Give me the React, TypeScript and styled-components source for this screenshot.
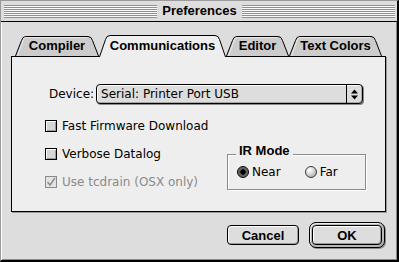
import React from "react";
import styled, { createGlobalStyle } from "styled-components";

const GlobalStyle = createGlobalStyle`
  html, body {
    margin: 0;
    padding: 0;
    background: #dddddd;
  }
  body {
    width: 399px;
    height: 262px;
    overflow: hidden;
  }
`;

const tabs = [
  { label: "Compiler", width: 84 },
  { label: "Communications", width: 127 },
  { label: "Editor", width: 63 },
  { label: "Text Colors", width: 93 },
];

const TabShape = ({ w, h, selected }: { w: number; h: number; selected: boolean }) => {
  const s = 6;
  const d = `M0.5 ${h} L${s + 0.5} 4.5 Q${s + 1.5} 0.5 ${s + 5} 0.5 L${w - s - 5} 0.5 Q${w - s - 1.5} 0.5 ${w - s - 0.5} 4.5 L${w - 0.5} ${h}`;
  return (
    <TabSvg width={w} height={h}>
      <path d={d} fill={selected ? "#eeeeee" : "#cccccc"} stroke="#000" />
      {!selected && (
        <path
          d={`M2.5 ${h} L${s + 2} 5 Q${s + 2.5} 1.5 ${s + 5} 1.5 L${w - s - 6} 1.5`}
          fill="none"
          stroke="#e8e8e8"
        />
      )}
    </TabSvg>
  );
};

const CheckMark = ({ color }: { color: string }) => (
  <svg width="10" height="10" viewBox="0 0 10 10">
    <path d="M1.5 5 L4 8 L9 1" fill="none" stroke={color} strokeWidth="1.4" />
  </svg>
);

const PopupArrowIcon = () => (
  <svg width="7" height="11" viewBox="0 0 7 11">
    <path d="M0 4.5 L3.5 0.5 L7 4.5 Z" fill="#000" />
    <path d="M0 6.5 L3.5 10.5 L7 6.5 Z" fill="#000" />
  </svg>
);

const App = () => {
  return (
    <>
      <GlobalStyle />
      <Window>
        <TitleBar>
          <Stripes />
          <Title>Preferences</Title>
          <Stripes />
        </TitleBar>

        <Body>
          <TabStrip>
            {tabs.map((t, i) => {
              const selected = i === 1;
              const h = selected ? 22 : 20;
              return (
                <Tab key={t.label} $w={t.width} $selected={selected}>
                  <TabShape w={t.width} h={h} selected={selected} />
                  <TabLabel>{t.label}</TabLabel>
                </Tab>
              );
            })}
          </TabStrip>

          <Panel>
            <DeviceRow>
              <span>Device:</span>
              <Popup>
                <PopupText>Serial: Printer Port USB</PopupText>
                <PopupArrows>
                  <PopupArrowIcon />
                </PopupArrows>
              </Popup>
            </DeviceRow>

            <Options>
              <CheckRow>
                <CheckBox />
                <span>Fast Firmware Download</span>
              </CheckRow>
              <CheckRow>
                <CheckBox />
                <span>Verbose Datalog</span>
              </CheckRow>
              <CheckRow $disabled>
                <CheckBox $disabled>
                  <CheckMark color="#8a8a8a" />
                </CheckBox>
                <span>Use tcdrain (OSX only)</span>
              </CheckRow>

              <GroupBox>
                <GroupTitle>IR Mode</GroupTitle>
                <RadioItem>
                  <Radio $on />
                  <span>Near</span>
                </RadioItem>
                <RadioItem>
                  <Radio />
                  <span>Far</span>
                </RadioItem>
              </GroupBox>
            </Options>
          </Panel>

          <Footer>
            <Button $w={72}>Cancel</Button>
            <DefaultRing>
              <Button $w={70}>OK</Button>
            </DefaultRing>
          </Footer>
        </Body>
      </Window>
    </>
  );
};

export default App;

const Window = styled.div`
  box-sizing: border-box;
  width: 399px;
  height: 262px;
  display: flex;
  flex-direction: column;
  background: #dddddd;
  border-top: 1px solid #9a9a9a;
  border-left: 1px solid #9a9a9a;
  border-right: 2px solid #000;
  border-bottom: 2px solid #000;
  box-shadow: inset 1px 1px 0 #fff, inset -1px -1px 0 #888;
  font-family: "DejaVu Sans", sans-serif;
  font-size: 12px;
  color: #000;
`;

const TitleBar = styled.div`
  height: 20px;
  display: flex;
  align-items: center;
  gap: 5px;
  padding: 0 2px 0 3px;
  border-bottom: 1px solid #000;
  background: #dddddd;
`;

const Stripes = styled.div`
  flex: 1;
  height: 13px;
  background: repeating-linear-gradient(to bottom, #8f8f8f 0 1px, #fafafa 1px 2px);
`;

const Title = styled.div`
  font: bold 13px "Liberation Sans", Arial, sans-serif;
  line-height: 14px;
`;

const Body = styled.div`
  flex: 1;
  display: flex;
  flex-direction: column;
  padding: 13px 11px 0 10px;
`;

const TabStrip = styled.div`
  position: relative;
  z-index: 1;
  height: 22px;
  display: flex;
  align-items: flex-end;
  padding-left: 4px;
  margin-bottom: -1px;
`;

const Tab = styled.div<{ $w: number; $selected?: boolean }>`
  position: relative;
  width: ${(p) => p.$w}px;
  height: ${(p) => (p.$selected ? 22 : 20)}px;
  margin-bottom: ${(p) => (p.$selected ? 0 : 1)}px;
  display: flex;
  align-items: center;
  justify-content: center;
  font: bold 13px "Liberation Sans", Arial, sans-serif;
`;

const TabSvg = styled.svg`
  position: absolute;
  left: 0;
  top: 0;
`;

const TabLabel = styled.span`
  position: relative;
  line-height: 14px;
`;

const Panel = styled.div`
  box-sizing: border-box;
  height: 156px;
  background: #eeeeee;
  border: 1px solid #000;
  box-shadow: 1px 1px 0 #9a9a9a;
  padding: 27px 0 0 33px;
`;

const DeviceRow = styled.div`
  display: flex;
  align-items: center;
  gap: 2px;
  padding-left: 4px;
  height: 20px;
`;

const Popup = styled.div`
  box-sizing: border-box;
  width: 267px;
  height: 20px;
  display: flex;
  border: 1px solid #000;
  border-radius: 4px;
  background: #dddddd;
  box-shadow: inset 1px 1px 0 #fff, inset -1px -1px 0 #a8a8a8, 1px 1px 0 #8a8a8a;
`;

const PopupText = styled.div`
  flex: 1;
  display: flex;
  align-items: center;
  padding-left: 4px;
`;

const PopupArrows = styled.div`
  width: 15px;
  border-left: 1px solid #000;
  display: flex;
  align-items: center;
  justify-content: center;
`;

const Options = styled.div`
  display: grid;
  grid-template-columns: 182px 139px;
  grid-template-rows: repeat(3, 28px);
  margin-top: 8px;
`;

const CheckRow = styled.div<{ $disabled?: boolean }>`
  grid-column: 1;
  display: flex;
  align-items: center;
  gap: 5px;
  color: ${(p) => (p.$disabled ? "#8a8a8a" : "#000")};
`;

const CheckBox = styled.div<{ $disabled?: boolean }>`
  box-sizing: border-box;
  width: 12px;
  height: 12px;
  display: flex;
  align-items: center;
  justify-content: center;
  border: 1px solid ${(p) => (p.$disabled ? "#8a8a8a" : "#000")};
  background: ${(p) => (p.$disabled ? "#e4e4e4" : "#d6d6d6")};
  box-shadow: ${(p) =>
    p.$disabled ? "none" : "inset 1px 1px 0 #fff, inset -1px -1px 0 #9a9a9a"};
`;

const GroupBox = styled.div`
  position: relative;
  grid-column: 2;
  grid-row: 2 / span 2;
  box-sizing: border-box;
  height: 36px;
  margin-top: 14px;
  border: 1px solid #8a8a8a;
  box-shadow: inset 1px 1px 0 #fff, 1px 1px 0 #fff;
  display: flex;
  align-items: center;
  gap: 24px;
  padding-left: 9px;
`;

const GroupTitle = styled.div`
  position: absolute;
  top: -11px;
  left: 8px;
  padding: 0 3px;
  background: #eeeeee;
  font: bold 13px "Liberation Sans", Arial, sans-serif;
  line-height: 14px;
`;

const RadioItem = styled.div`
  display: flex;
  align-items: center;
  gap: 3px;
`;

const Radio = styled.div<{ $on?: boolean }>`
  box-sizing: border-box;
  width: 12px;
  height: 12px;
  border-radius: 50%;
  border: 1px solid ${(p) => (p.$on ? "#000" : "#3a3a3a")};
  background: ${(p) =>
    p.$on
      ? "radial-gradient(circle at 50% 50%, #000 0 2.4px, #555 2.9px, #8a8a8a 100%)"
      : "radial-gradient(circle at 35% 30%, #fff 0, #e2e2e2 35%, #9a9a9a 100%)"};
`;

const Footer = styled.div`
  display: flex;
  justify-content: flex-end;
  align-items: center;
  gap: 10px;
  margin-top: 10px;
  padding-right: 1px;
`;

const Button = styled.button<{ $w: number }>`
  box-sizing: border-box;
  width: ${(p) => p.$w}px;
  height: 20px;
  padding: 0;
  border: 1px solid #000;
  border-radius: 4px;
  background: #dddddd;
  box-shadow: inset 1px 1px 0 #fff, inset -1px -1px 0 #9a9a9a;
  font: bold 13px "Liberation Sans", Arial, sans-serif;
  color: #000;
`;

const DefaultRing = styled.div`
  box-sizing: border-box;
  display: flex;
  padding: 2px;
  border: 1px solid #000;
  border-radius: 7px;
  background: #b8b8b8;
  box-shadow: inset 1px 1px 0 #eee, 1px 1px 0 #8a8a8a;
`;
